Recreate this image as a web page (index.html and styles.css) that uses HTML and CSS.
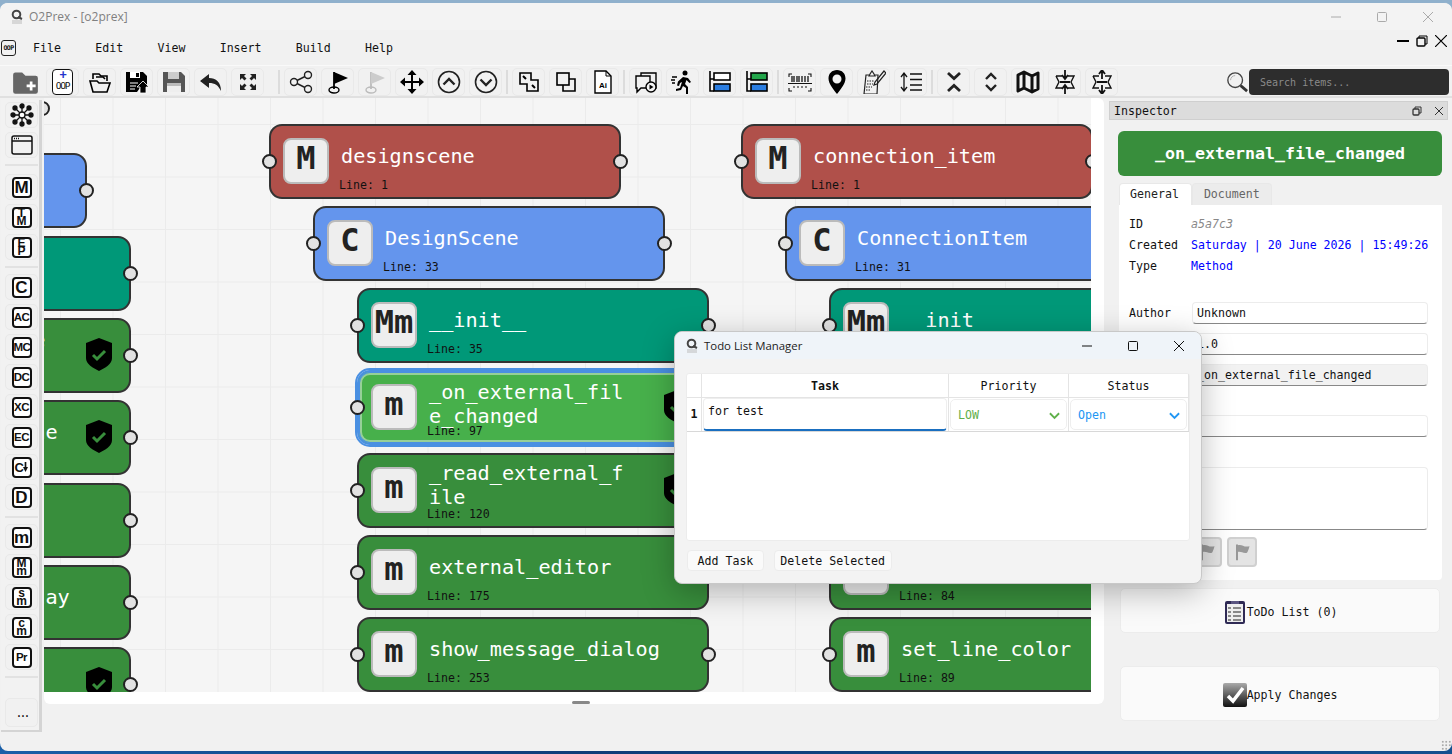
FILE: index.html
```html
<!DOCTYPE html>
<html lang="en">
<head>
<meta charset="UTF-8">
<title>O2Prex - [o2prex]</title>
<link rel="stylesheet" href="styles.css">
</head>
<body>
<div class="window">
  <div class="titlebar">
    <svg class="app-logo" viewBox="0 0 16 16"><circle cx="7.5" cy="5.500" r="3.800" fill="none" stroke="#444" stroke-width="2"/><path d="M9 8l4 2" stroke="#444" stroke-width="2"/><path d="M3 12h10M3 14h10" stroke="#bbb"/></svg>
    <span class="app-title">O2Prex - [o2prex]</span>
    <div class="win-controls">
      <svg viewBox="0 0 12 12"><path d="M1 6h10" stroke="#aaa"/></svg>
      <svg viewBox="0 0 12 12"><rect x="1.5" y="1.5" width="9" height="9" rx="1" fill="none" stroke="#aaa"/></svg>
      <svg viewBox="0 0 12 12"><path d="M1 1l10 10M11 1L1 11" stroke="#aaa"/></svg>
    </div>
  </div>

  <div class="menubar">
    <span class="oop-mini">OOP</span>
    <span class="menu-item">File</span>
    <span class="menu-item">Edit</span>
    <span class="menu-item">View</span>
    <span class="menu-item">Insert</span>
    <span class="menu-item">Build</span>
    <span class="menu-item">Help</span>
    <div class="mdi-controls">
      <svg viewBox="0 0 12 12"><path d="M0 6h12" stroke="#000" stroke-width="2"/></svg>
      <svg viewBox="0 0 12 12"><rect x="1" y="3" width="8" height="8" rx="1" fill="none" stroke="#000" stroke-width="1.4"/><path d="M3 3V1h8v8H9" fill="none" stroke="#000"/></svg>
      <svg viewBox="0 0 12 12"><path d="M0 0l12 12M12 0L0 12" stroke="#000" stroke-width="1.2"/></svg>
    </div>
  </div>

  <div class="toolbar">
    <button class="tool flat"><svg viewBox="0 0 24 24"><path d="M1 5a2 2 0 0 1 2-2h6l3 3h9a2 2 0 0 1 2 2v12a2 2 0 0 1-2 2H3a2 2 0 0 1-2-2z" fill="#666"/><path d="M17 11v8M13 15h8" stroke="#fff" stroke-width="2.4"/></svg></button>
    <button class="tool"><span class="oop-new"><b>+</b>OOP</span></button>
    <button class="tool"><svg viewBox="0 0 24 24" fill="none" stroke="#000" stroke-width="1.6"><path d="M5 9V4h6l2 2h6v5"/><path d="M8 7h7l2 2"/><path d="M2 11h7l2 2h11l-3 9H5z"/></svg></button>
    <button class="tool"><svg viewBox="0 0 24 24"><path d="M1 2h17l4 4v9h-5l-5 7H1z" fill="#000"/><path d="M5 2h10v6H5z" fill="#fff"/><path d="M11 3h3v4h-3z" fill="#000"/><path d="M5 13h8M5 16h6M5 19h5" stroke="#fff" stroke-width="1.2"/><path d="M18 11l6 6h-3v6h-6v-6h-3z" fill="#000" stroke="#fff" stroke-width=".8"/></svg></button>
    <button class="tool"><svg viewBox="0 0 24 24"><path d="M1 2h18l4 4v16H1z" fill="#555"/><path d="M6 2h11v7H6z" fill="#ccc"/><path d="M5 13h14v9H5z" fill="#eee"/><path d="M5 13h14v3H5z" fill="#bbb"/></svg></button>
    <button class="tool"><svg viewBox="0 0 24 24"><path d="M10 4L1 11l9 7v-5c6 0 9 2 12 8 0-9-5-13-12-13z" fill="#222"/></svg></button>
    <button class="tool"><svg viewBox="0 0 24 24" fill="#222"><path d="M4 4h6L8 6l2.500 2.500-2 2L6 8 4 10zM20 4h-6l2 2-2.500 2.500 2 2L18 8l2 2zM4 20h6l-2-2 2.500-2.500-2-2L6 16l-2-2zM20 20h-6l2-2-2.500-2.500 2-2L18 16l2-2z"/></svg></button>
    <span class="tool-sep"></span>
    <button class="tool"><svg viewBox="0 0 24 24" fill="none" stroke="#222" stroke-width="1.4"><circle cx="5" cy="12" r="3.500"/><circle cx="19" cy="5" r="3.500"/><circle cx="19" cy="19" r="3.500"/><path d="M8 10.500l8-4M8 13.500l8 4"/></svg></button>
    <button class="tool"><svg viewBox="0 0 24 24"><path d="M8 2v17" stroke="#000" stroke-width="1.800"/><path d="M8 2l14 6-14 6z" fill="#000"/><ellipse cx="8" cy="20" rx="5" ry="3" fill="none" stroke="#000" stroke-width="1.400"/></svg></button>
    <button class="tool"><svg viewBox="0 0 24 24"><path d="M8 2v17" stroke="#bbb" stroke-width="1.800"/><path d="M8 2l14 6-14 6z" fill="#ccc"/><ellipse cx="8" cy="20" rx="5" ry="3" fill="none" stroke="#bbb" stroke-width="1.400"/></svg></button>
    <button class="tool"><svg viewBox="0 0 24 24"><path d="M12 4v16M4 12h16" stroke="#000" stroke-width="2"/><path d="M12 0l4.500 5h-9zM12 24l4.500-5h-9zM0 12l5-4.500v9zM24 12l-5-4.500v9z" fill="#000"/></svg></button>
    <button class="tool"><svg viewBox="0 0 24 24" fill="none" stroke="#222" stroke-width="1.600"><circle cx="12" cy="12" r="10.500"/><path d="M6.500 14.500L12 9l5.500 5.500" stroke-width="2.400"/></svg></button>
    <button class="tool"><svg viewBox="0 0 24 24" fill="none" stroke="#222" stroke-width="1.600"><circle cx="12" cy="12" r="10.500"/><path d="M6.500 9.500L12 15l5.500-5.500" stroke-width="2.400"/></svg></button>
    <span class="tool-sep short"></span>
    <button class="tool"><svg viewBox="0 0 24 24" fill="none" stroke="#000" stroke-width="1.600"><path d="M3 3h11v7h7v11H10v-7H3z"/><path d="M6 6l3 3M18 18l-3-3" stroke-width="2"/></svg></button>
    <button class="tool"><svg viewBox="0 0 24 24" fill="none" stroke="#000" stroke-width="1.600"><rect x="3" y="3" width="12" height="12"/><path d="M15 9h6v12H9v-6"/></svg></button>
    <button class="tool"><svg viewBox="0 0 24 24"><path d="M4 1h11l5 5v17H4z" fill="#fff" stroke="#000" stroke-width="1.400"/><path d="M15 1v5h5" fill="none" stroke="#000"/><text x="12" y="18" class="ai-text">Ai</text></svg></button>
    <span class="tool-sep short"></span>
    <button class="tool"><svg viewBox="0 0 24 24" fill="none" stroke="#000" stroke-width="1.400"><path d="M7 6V3h15v15h-3"/><path d="M2 6h14v12H7l-4 4v-4H2z"/><circle cx="17" cy="17" r="5" fill="#f4f4f4"/><path d="M15.500 14.500l4 2.500-4 2.500z" fill="#000" stroke="none"/></svg></button>
    <button class="tool"><svg viewBox="0 0 24 24"><circle cx="14" cy="3" r="2.500"/><path d="M12 7l5 1 3 4-1.500 1-3-3-1.500 4 3 3v7h-2v-6l-3-2-2 4-5 1v-2l4-1 2-6-2 1-1 3-2-.5 1-4z"/><path d="M1 7h5M0 10h4M1 13h3" stroke="#000" stroke-width="1.300"/></svg></button>
    <button class="tool"><svg viewBox="0 0 24 24"><path d="M2 1v20h4M2 9h4" fill="none" stroke="#000" stroke-width="1.600"/><rect x="6" y="3" width="16" height="7" fill="#fff" stroke="#000" stroke-width="1.600"/><rect x="6" y="14" width="16" height="7" fill="#2a7de1" stroke="#000" stroke-width="1.600"/></svg></button>
    <button class="tool"><svg viewBox="0 0 24 24"><path d="M2 1v20h4M2 9h4" fill="none" stroke="#000" stroke-width="1.600"/><rect x="6" y="3" width="16" height="7" fill="#22a64a" stroke="#000" stroke-width="1.600"/><rect x="6" y="14" width="16" height="7" fill="#2a7de1" stroke="#000" stroke-width="1.600"/></svg></button>
    <span class="tool-sep short"></span>
    <button class="tool"><svg viewBox="0 0 24 24" fill="none" stroke="#111" stroke-width="1.100"><path d="M1 7V4h3M20 4h3v3M1 18v3h3M20 21h3v-3"/><path d="M4 6v6M6 6v6M9 6v6M11 6v6M14 6v6M17 6v6M20 6v6" stroke-width="1.300"/><path d="M0 13.500h24"/><path d="M5 17h2M9 17h2M13 17h2M17 17h2"/></svg></button>
    <button class="tool"><svg viewBox="0 0 24 24"><path fill-rule="evenodd" d="M12 0c-5 0-8.500 3.500-8.500 8.500C3.500 14 9 20 12 24c3-4 8.500-10 8.500-15.500C20.500 3.500 17 0 12 0zm0 4.500a4.500 4.500 0 1 1 0 9 4.500 4.500 0 0 1 0-9z"/></svg></button>
    <button class="tool"><svg viewBox="0 0 24 24" fill="none" stroke="#222" stroke-width="1.200"><path d="M13 5h3l-1 19H2L4 5h3"/><path d="M7 6l1-2 2-3 2 3 1 2z"/><path d="M5 11h7M5 14h6M4 17h6M4 20h5" stroke-dasharray="1.500 1"/><path d="M22 1l2 2-9 11-3 1 1-3z"/></svg></button>
    <button class="tool"><svg viewBox="0 0 24 24" fill="none" stroke="#111" stroke-width="1.300"><path d="M5 4v16M2 7l3-4 3 4M2 17l3 4 3-4"/><path d="M11 4h12M11 9.500h12M11 15h12M11 20h12"/></svg></button>
    <span class="tool-sep short"></span>
    <button class="tool"><svg viewBox="0 0 24 24" fill="none" stroke="#222" stroke-width="2.800"><path d="M6 3l6 5.500L18 3M6 21l6-5.500 6 5.500"/></svg></button>
    <button class="tool"><svg viewBox="0 0 24 24" fill="none" stroke="#222" stroke-width="2.400"><path d="M7 9l5-5 5 5M7 15l5 5 5-5"/></svg></button>
    <button class="tool"><svg viewBox="0 0 24 24" fill="none" stroke="#111" stroke-width="3" stroke-linejoin="round"><path d="M2 5l6-3 8 4 6-3v16l-6 3-8-4-6 3zM8 2v16M16 6v16"/></svg></button>
    <button class="tool"><svg viewBox="0 0 24 24" fill="none" stroke="#111" stroke-width="1.400"><path d="M3 6h6M15 6h6l-3 6 3 6h-6M9 18H3l3-6-3-6"/><path d="M12 0v8M12 24v-8M9 5l3 4 3-4M9 19l3-4 3 4M7 12h10" stroke-width="1.800"/></svg></button>
    <button class="tool"><svg viewBox="0 0 24 24" fill="none" stroke="#111" stroke-width="1.400"><path d="M3 6h6M15 6h6l-3 6 3 6h-6M9 18H3l3-6-3-6"/><path d="M12 9V1M12 15v8M9 4l3-4 3 4M9 20l3 4 3-4M7 12h10" stroke-width="1.800"/></svg></button>
    <div class="search">
      <svg viewBox="0 0 24 24" fill="none"><circle cx="10" cy="10" r="8" stroke="#444" stroke-width="1.500"/><path d="M5 10a5 5 0 0 1 5-5" stroke="#aaa"/><path d="M16 16l7 6" stroke="#333" stroke-width="3"/></svg>
      <div class="search-box">Search items...</div>
    </div>
  </div>

  <div class="workspace">
    <aside class="sidebar">
      <button class="side-btn"><svg viewBox="0 0 24 24" stroke="#111" stroke-width="1.300" fill="#111"><path d="M12 12L12 3M12 12L12 21M12 12L3 12M12 12L21 12M12 12L5 5M12 12L19 19M12 12L5 19M12 12L19 5"/><circle cx="12" cy="3" r="2"/><circle cx="12" cy="21" r="2"/><circle cx="3" cy="12" r="2"/><circle cx="21" cy="12" r="2"/><circle cx="5" cy="5" r="2"/><circle cx="19" cy="19" r="2"/><circle cx="5" cy="19" r="2"/><circle cx="19" cy="5" r="2"/><circle cx="12" cy="12" r="3" fill="#fff"/></svg></button>
      <button class="side-btn"><svg viewBox="0 0 24 24" fill="none" stroke="#111" stroke-width="1.500"><rect x="2" y="3" width="20" height="18" rx="2"/><path d="M2 8h20"/><path d="M4 5.500h5" stroke-dasharray="1 1"/></svg></button>
      <span class="side-sep first"></span>
      <button class="side-btn"><span class="kind">M</span></button>
      <button class="side-btn"><span class="kind stack">T<br>M</span></button>
      <button class="side-btn"><span class="kind stack">E<br>P</span></button>
      <span class="side-sep"></span>
      <button class="side-btn"><span class="kind">C</span></button>
      <button class="side-btn"><span class="kind two">AC</span></button>
      <button class="side-btn"><span class="kind two">MC</span></button>
      <button class="side-btn"><span class="kind two">DC</span></button>
      <button class="side-btn"><span class="kind two">XC</span></button>
      <button class="side-btn"><span class="kind two">EC</span></button>
      <button class="side-btn"><span class="kind two arrowed">C<svg viewBox="0 0 6 12"><path d="M3 0v7" stroke="#111" stroke-width="2"/><path d="M0 6h6l-3 6z" fill="#111"/></svg></span></button>
      <button class="side-btn"><span class="kind">D</span></button>
      <span class="side-sep"></span>
      <button class="side-btn"><span class="kind">m</span></button>
      <button class="side-btn"><span class="kind stack">M<br>m</span></button>
      <button class="side-btn"><span class="kind stack">s<br>m</span></button>
      <button class="side-btn"><span class="kind stack">c<br>m</span></button>
      <button class="side-btn"><span class="kind two">Pr</span></button>
      <span class="side-sep"></span>
      <button class="side-btn more">...</button>
    </aside>

    <div class="canvas-wrap">
      <div class="canvas">
        <div class="node red x-m0 y-a0"><i class="port l"></i><i class="port r"></i></div>

        <div class="node blue x-c0 y-b0"><i class="port r"></i></div>
        <div class="node teal x-f0 y-b1"><i class="port r"></i></div>
        <div class="node green x-f0 y-b2"><i class="port r"></i><h3 class="title wrap">_on_scene_change<br>d</h3><svg class="shield"><use href="#shield"/></svg></div>
        <div class="node green x-f0 y-b3"><i class="port r"></i><h3 class="title">update_node_scene</h3><svg class="shield"><use href="#shield"/></svg></div>
        <div class="node green x-f0 y-b4"><i class="port r"></i></div>
        <div class="node green x-f0 y-b5"><i class="port r"></i><h3 class="title">update_the_display</h3></div>
        <div class="node green x-f0 y-b6"><i class="port r"></i><svg class="shield"><use href="#shield"/></svg></div>

        <div class="node red x-m1 y-r0"><i class="port l"></i><i class="port r"></i><span class="badge">M</span><h3 class="title">designscene</h3><span class="line">Line: 1</span></div>
        <div class="node blue x-c1 y-r1"><i class="port l"></i><i class="port r"></i><span class="badge">C</span><h3 class="title">DesignScene</h3><span class="line">Line: 33</span></div>
        <div class="node teal x-f1 y-r2"><i class="port l"></i><i class="port r"></i><span class="badge">Mm</span><h3 class="title">__init__</h3><span class="line">Line: 35</span></div>
        <div class="node lime selected x-f1 y-r3"><i class="port l"></i><i class="port r"></i><span class="badge">m</span><h3 class="title wrap">_on_external_fil<br>e_changed</h3><span class="line">Line: 97</span><svg class="shield"><use href="#shield"/></svg></div>
        <div class="node green x-f1 y-r4"><i class="port l"></i><i class="port r"></i><span class="badge">m</span><h3 class="title wrap higher">_read_external_f<br>ile</h3><span class="line">Line: 120</span><svg class="shield"><use href="#shield"/></svg></div>
        <div class="node green x-f1 y-r5"><i class="port l"></i><i class="port r"></i><span class="badge">m</span><h3 class="title">external_editor</h3><span class="line">Line: 175</span></div>
        <div class="node green x-f1 y-r6"><i class="port l"></i><i class="port r"></i><span class="badge">m</span><h3 class="title">show_message_dialog</h3><span class="line">Line: 253</span></div>

        <div class="node red x-m2 y-r0"><i class="port l"></i><i class="port r"></i><span class="badge">M</span><h3 class="title">connection_item</h3><span class="line">Line: 1</span></div>
        <div class="node blue x-c2 y-r1"><i class="port l"></i><i class="port r"></i><span class="badge">C</span><h3 class="title">ConnectionItem</h3><span class="line">Line: 31</span></div>
        <div class="node teal x-f2 y-r2"><i class="port l"></i><i class="port r"></i><span class="badge">Mm</span><h3 class="title">__init__</h3><span class="line">Line: 35</span></div>
        <div class="node green x-f2 y-r5"><i class="port l"></i><i class="port r"></i><span class="badge">m</span><h3 class="title">set_line_width</h3><span class="line">Line: 84</span></div>
        <div class="node green x-f2 y-r6"><i class="port l"></i><i class="port r"></i><span class="badge">m</span><h3 class="title">set_line_color</h3><span class="line">Line: 89</span></div>
      </div>
      <span class="scroll-handle"></span>
    </div>

    <section class="inspector">
      <header class="insp-head">
        <span>Inspector</span>
        <svg viewBox="0 0 12 12"><rect x="2" y="4" width="6" height="6" rx="1" fill="none" stroke="#333" stroke-width="1.300"/><path d="M4 4V2h6v6H8" fill="none" stroke="#333"/></svg>
        <svg viewBox="0 0 12 12"><path d="M2 2l8 8M10 2l-8 8" stroke="#333"/></svg>
      </header>
      <div class="insp-name">_on_external_file_changed</div>
      <div class="tabs"><span class="tab active">General</span><span class="tab">Document</span></div>
      <div class="panel">
        <div class="info"><span>ID</span><em>a5a7c3</em></div>
        <div class="info"><span>Created</span><b>Saturday | 20 June 2026 | 15:49:26</b></div>
        <div class="info"><span>Type</span><b>Method</b></div>
        <div class="field first"><label>Author</label><div class="input">Unknown</div></div>
        <div class="field"><label>Version</label><div class="input">1.0</div></div>
        <div class="field"><label>Name</label><div class="input readonly">_on_external_file_changed</div></div>
        <div class="field spaced"><label>Tags</label><div class="input"></div></div>
        <div class="field notes"><label>Notes</label><div class="input area"></div></div>
        <div class="flags">
          <span class="flag"><svg viewBox="0 0 24 24"><path d="M6 3v19" stroke="#888" stroke-width="2"/><path d="M7 4c5-2 7 3 14 1-1 4-2 6-3 8-5 1-7-2-11-1z" fill="#999"/></svg></span>
          <span class="flag"><svg viewBox="0 0 24 24"><path d="M6 3v19" stroke="#888" stroke-width="2"/><path d="M7 4c5-2 7 3 14 1-1 4-2 6-3 8-5 1-7-2-11-1z" fill="#999"/></svg></span>
        </div>
      </div>
      <button class="wide-btn todo">
        <svg viewBox="0 0 20 24"><rect x="0" y="1" width="20" height="23" rx="2" fill="#2f2a55"/><rect x="2" y="4" width="16" height="18" fill="#eee"/><rect x="6" y="1" width="8" height="3" fill="#5a5480"/><path d="M8 8h8M8 12h8M8 16h8M8 20h8M3 8h3M3 12h3M3 16h3M3 20h3" stroke="#222" stroke-width="1.200"/></svg>
        ToDo List (0)
      </button>
      <button class="wide-btn apply">
        <svg viewBox="0 0 24 24"><defs><linearGradient id="applyFill" x1="0" y1="0" x2="0" y2="1"><stop offset="0" stop-color="#aaa"/><stop offset="1" stop-color="#111"/></linearGradient></defs><rect width="24" height="24" rx="2" fill="url(#applyFill)"/><path d="M5 13l5 5L20 5" fill="none" stroke="#fff" stroke-width="3.500"/></svg>
        Apply Changes
      </button>
      <span class="grip"></span>
    </section>
  </div>
</div>

<div class="dialog">
  <div class="dlg-title">
    <svg class="app-logo" viewBox="0 0 16 16"><circle cx="7.500" cy="5.500" r="3.800" fill="none" stroke="#444" stroke-width="2"/><path d="M9 8l4 2" stroke="#444" stroke-width="2"/><path d="M3 12h10M3 14h10" stroke="#bbb"/></svg>
    <span>Todo List Manager</span>
    <div class="dlg-controls">
      <svg viewBox="0 0 12 12"><path d="M1 6h10" stroke="#111"/></svg>
      <svg viewBox="0 0 12 12"><rect x="1.500" y="1.500" width="9" height="9" rx="1" fill="none" stroke="#111"/></svg>
      <svg viewBox="0 0 12 12"><path d="M1 1l10 10M11 1L1 11" stroke="#111"/></svg>
    </div>
  </div>
  <div class="todo-table">
    <div class="todo-row head">
      <span class="c-num"></span>
      <span class="c-task strong">Task</span>
      <span class="c-pri">Priority</span>
      <span class="c-stat">Status</span>
    </div>
    <div class="todo-row body">
      <span class="c-num strong">1</span>
      <span class="c-task"><span class="task-edit">for test</span></span>
      <span class="c-pri"><span class="combo low">LOW<svg viewBox="0 0 12 8"><path d="M1 1l5 5 5-5" fill="none" stroke="currentColor" stroke-width="2"/></svg></span></span>
      <span class="c-stat"><span class="combo open">Open<svg viewBox="0 0 12 8"><path d="M1 1l5 5 5-5" fill="none" stroke="currentColor" stroke-width="2"/></svg></span></span>
    </div>
  </div>
  <div class="dlg-actions">
    <button class="dlg-btn">Add Task</button>
    <button class="dlg-btn tight">Delete Selected</button>
  </div>
</div>

<svg class="defs" width="0" height="0">
  <symbol id="shield" viewBox="0 0 28 33">
    <path d="M14 0l13 5v15c0 6-7 10-13 13C8 30 1 26 1 20V5z" fill="#000"/>
    <path d="M8 17l4 4 8-8" fill="none" stroke="#388e3c" stroke-width="3"/>
  </symbol>
</svg>
</body>
</html>
```

FILE: styles.css
```css
* {
  box-sizing: border-box;
}
html, body {
  margin: 0;
  height: 754px;
  overflow: hidden;
}
body {
  position: relative;
  padding-top: 2px;
  font-family: "DejaVu Sans Mono", monospace;
  font-size: 11.6px;
  color: #111;
  background:
    linear-gradient(#8fb0cc 40px, transparent 40px),
    linear-gradient(90deg, #1a5fa8, #0e3c78 40%, #15508f);
}
button {
  font: inherit;
  color: inherit;
  padding: 0;
}
h3 {
  margin: 0;
  font-weight: normal;
}
.defs {
  position: absolute;
}

.window {
  height: 749px;
  display: flex;
  flex-direction: column;
  background: #f1f1f1;
  border-radius: 8px;
  border-top: 1px solid #8fb0cc;
  overflow: hidden;
}

/* title + menu */
.titlebar {
  height: 27px;
  flex: none;
  display: flex;
  align-items: center;
  padding-left: 9px;
  background: #f3f3f3;
}
.app-logo {
  width: 16px;
  height: 16px;
}
.app-title {
  margin-left: 4px;
  font-family: "Open Sans", sans-serif;
  font-size: 12px;
  color: #808080;
}
.win-controls {
  margin-left: auto;
  display: flex;
  gap: 34px;
  padding-right: 18px;
}
.win-controls svg {
  width: 12px;
  height: 12px;
}
.menubar {
  height: 36px;
  flex: none;
  display: flex;
  align-items: center;
  padding-left: 1px;
  border-bottom: 1px solid #f9f9f9;
}
.oop-mini {
  width: 15px;
  height: 16px;
  margin-right: 17px;
  border: 1px solid #222;
  border-radius: 3px;
  font-size: 6.500px;
  font-weight: bold;
  line-height: 14px;
  text-align: center;
  letter-spacing: -.6px;
}
.menu-item {
  margin-right: 34.300px;
}
.mdi-controls {
  margin-left: auto;
  align-self: flex-start;
  margin-top: 5px;
  display: flex;
  gap: 7px;
  padding-right: 5px;
}
.mdi-controls svg {
  width: 12px;
  height: 12px;
}

/* main toolbar */
.toolbar {
  height: 32px;
  flex: none;
  display: flex;
  align-items: center;
  gap: 4px;
  padding: 2px 3px 0 9px;
  border-bottom: 2px solid #e0e0e0;
}
.tool {
  width: 33px;
  height: 28px;
  flex: none;
  display: flex;
  align-items: center;
  justify-content: center;
  background: #f1f1f1;
  border: 1px solid #e9e9e9;
  border-radius: 5px;
}
.tool svg {
  width: 24px;
  height: 24px;
}
.tool.flat {
  border-color: transparent;
}
.tool.flat svg {
  width: 27px;
  height: 27px;
}
.tool-sep {
  width: 2px;
  height: 24px;
  margin-left: 10px;
  background: #dcdcdc;
}
.tool-sep.short {
  margin-left: 0;
}
.oop-new {
  width: 21px;
  height: 26px;
  border: 1.500px solid #111;
  border-radius: 4px;
  background: #fff;
  font-size: 9.500px;
  line-height: 9px;
  letter-spacing: -1.300px;
  text-align: center;
}
.oop-new b {
  display: block;
  font-size: 12px;
  line-height: 11px;
  color: #2233cc;
}
.ai-text {
  font-family: "Liberation Sans", sans-serif;
  font-size: 8px;
  font-weight: bold;
  text-anchor: middle;
}
.search {
  margin-left: auto;
  display: flex;
  align-items: center;
  gap: 1px;
}
.search svg {
  width: 22px;
  height: 22px;
}
.search-box {
  width: 200px;
  height: 26px;
  padding-left: 11px;
  background: #2d2d2d;
  border-radius: 4px;
  color: #8a8a8a;
  font-size: 10px;
  line-height: 27px;
}

/* left palette */
.workspace {
  flex: 1;
  min-height: 0;
  display: flex;
}
.sidebar {
  width: 41px;
  height: 632px;
  margin: 2px 2px 0 1px;
  flex: none;
  display: flex;
  flex-direction: column;
  gap: 4px;
  padding: 2px 1px 0 4px;
  background: #f2f2f2;
  border-right: 3px solid #d4d4d4;
  border-bottom: 2px solid #d4d4d4;
}
.side-btn {
  height: 26px;
  flex: none;
  display: flex;
  align-items: center;
  justify-content: center;
  background: #f1f1f1;
  border: 1px solid #e9e9e9;
  border-radius: 5px;
}
.side-btn svg {
  width: 24px;
  height: 24px;
}
.side-btn.more {
  height: 29px;
  margin-top: 14px;
  letter-spacing: -3px;
}
.side-sep {
  height: 2px;
  margin: 2px 0;
  flex: none;
  background: #e2e2e2;
}
.side-sep.first {
  margin-bottom: 4px;
}
.kind {
  width: 20px;
  height: 21px;
  background: #fff;
  border: 2px solid #111;
  border-radius: 4px;
  font-family: "Liberation Sans", sans-serif;
  font-size: 17px;
  font-weight: bold;
  line-height: 17px;
  text-align: center;
}
.kind.two {
  font-size: 11.500px;
  letter-spacing: -.5px;
}
.kind.stack {
  font-size: 12px;
  line-height: 8.500px;
}
.kind.arrowed {
  display: flex;
  align-items: center;
  justify-content: center;
  font-size: 13px;
}
.kind.arrowed svg {
  width: 5px;
  height: 12px;
}

/* canvas and nodes */
.canvas-wrap {
  position: relative;
  width: 1060px;
  height: 606px;
  flex: none;
  padding: 0 13px 12px 0;
  background: #fff;
  border-radius: 6px;
}
.canvas {
  position: relative;
  height: 100%;
  overflow: hidden;
  background-color: #f5f5f5;
  background-image:
    linear-gradient(#ebebeb 1px, transparent 1px),
    linear-gradient(90deg, #ebebeb 1px, transparent 1px);
  background-size: 52.500px 52.500px;
  background-position: 16px 26px;
}
.scroll-handle {
  position: absolute;
  left: 528px;
  bottom: 0;
  width: 18px;
  height: 3px;
  background: #888;
  border-radius: 2px;
}
.node {
  position: absolute;
  width: 352px;
  height: 75px;
  border: 2px solid #333;
  border-radius: 13px;
}
.red { background: #b0504a; }
.blue { background: #6495ed; }
.teal { background: #009878; }
.green { background: #388e3c; }
.lime { background: #47b04b; }
.node.selected {
  border-color: #4a90e2;
  outline: 2px solid #4a90e2;
  box-shadow: inset 0 0 0 1px #4a90e2, inset 0 0 0 3px #96d098;
}

.x-m0 { left: -353px; }
.x-c0 { left: -309px; }
.x-f0 { left: -265px; }
.x-m1 { left: 225px; }
.x-c1 { left: 269px; }
.x-f1 { left: 313px; }
.x-m2 { left: 697px; }
.x-c2 { left: 741px; }
.x-f2 { left: 785px; }

.y-a0 { top: -27px; }
.y-r0 { top: 26px; }
.y-r1 { top: 108px; }
.y-r2 { top: 190px; }
.y-r3 { top: 272px; }
.y-r4 { top: 355px; }
.y-r5 { top: 437px; }
.y-r6 { top: 519px; }
.y-b0 { top: 55px; }
.y-b1 { top: 138px; }
.y-b2 { top: 220px; }
.y-b3 { top: 302px; }
.y-b4 { top: 385px; }
.y-b5 { top: 467px; }
.y-b6 { top: 549px; }

.port {
  position: absolute;
  top: 28px;
  width: 15px;
  height: 15px;
  background: #e2e2e2;
  border: 2px solid #222;
  border-radius: 50%;
}
.port.l { left: -9px; }
.port.r { right: -9px; }
.badge {
  position: absolute;
  left: 12px;
  top: 12px;
  width: 46px;
  height: 46px;
  background: #eee;
  border: 2px solid #bbb;
  border-radius: 8px;
  color: #222;
  font-size: 32px;
  font-weight: bold;
  line-height: 37px;
  text-align: center;
  white-space: nowrap;
}
.title {
  position: absolute;
  left: 70px;
  top: 18px;
  color: #fff;
  font-size: 20.200px;
  line-height: 24px;
  white-space: nowrap;
}
.title.wrap {
  top: 8px;
}
.title.wrap.higher {
  top: 6px;
}
.line {
  position: absolute;
  left: 68px;
  top: 52px;
  font-size: 11.600px;
  line-height: 14px;
}
.shield {
  position: absolute;
  right: 16px;
  top: 18px;
  width: 28px;
  height: 33px;
}

/* inspector */
.inspector {
  position: relative;
  width: 344px;
  margin-left: 4px;
  flex: none;
  padding: 3px 4px 0 1px;
}
.insp-head {
  height: 19px;
  display: flex;
  align-items: center;
  gap: 10px;
  padding: 0 2px 0 4px;
  background: #dcdcdc;
  border: 1px solid #cfcfcf;
}
.insp-head span {
  margin-right: auto;
}
.insp-head svg {
  width: 12px;
  height: 12px;
}
.insp-name {
  height: 45px;
  margin: 11px 6px 0 9px;
  background: #388e3c;
  border-radius: 6px;
  color: #fff;
  font-size: 16.600px;
  font-weight: bold;
  line-height: 46px;
  text-align: center;
}
.tabs {
  display: flex;
  margin: 7px 0 0 10px;
}
.tab {
  height: 22px;
  padding: 0 11px;
  background: #ececec;
  border: 1px solid #e8e8e8;
  border-bottom: none;
  border-radius: 4px 4px 0 0;
  color: #666;
  line-height: 20px;
}
.tab.active {
  padding: 0 12px 0 10px;
  background: #fff;
  color: #222;
}
.panel {
  height: 375px;
  margin: 0 6px 0 10px;
  padding: 9px 14px 0 10px;
  background: #fff;
  border-radius: 0 0 4px 4px;
}
.info {
  display: flex;
  height: 21px;
  line-height: 21px;
  white-space: nowrap;
}
.info span {
  width: 62px;
  flex: none;
}
.info em {
  color: #888;
}
.info b {
  color: #0000ff;
  font-weight: normal;
}
.field {
  display: flex;
  align-items: center;
  margin-bottom: 9px;
}
.field.first {
  margin-top: 25px;
}
.field.spaced {
  margin-top: 29px;
}
.field.notes {
  margin-top: 30px;
  margin-bottom: 7px;
}
.field label {
  width: 63px;
  flex: none;
}
.input {
  flex: 1;
  height: 22px;
  padding-left: 4px;
  background: #fff;
  border: 1px solid #ececec;
  border-bottom-color: #888;
  border-radius: 4px;
  line-height: 20px;
}
.input.readonly {
  background: #f2f2f2;
}
.input.area {
  height: 63px;
}
.flags {
  display: flex;
  gap: 5px;
  padding-left: 63px;
}
.flag {
  width: 30px;
  height: 30px;
  padding: 3px;
  background: #e4e4e4;
  border: 2px solid #d0d0d0;
  border-radius: 4px;
}
.flag svg {
  display: block;
  width: 100%;
  height: 100%;
}
.wide-btn {
  width: 320px;
  margin-left: 11px;
  padding-top: 2px;
  display: flex;
  align-items: center;
  justify-content: center;
  background: #fafafa;
  border: 1px solid #ececec;
  border-radius: 5px;
}
.wide-btn.todo {
  height: 45px;
  margin-top: 8px;
}
.wide-btn.apply {
  height: 55px;
  margin-top: 33px;
}
.wide-btn svg {
  width: 24px;
  height: 24px;
}
.grip {
  position: absolute;
  right: 1px;
  bottom: 1px;
  width: 10px;
  height: 10px;
  background-image: radial-gradient(#aaa 1px, transparent 1px);
  background-size: 3.500px 3.500px;
}

/* todo dialog */
.dialog {
  position: absolute;
  left: 674px;
  top: 331px;
  width: 528px;
  height: 253px;
  background: #f3f3f3;
  border: 1px solid #c8c8c8;
  border-radius: 8px;
  box-shadow: 0 8px 32px rgba(0, 0, 0, .28);
  overflow: hidden;
}
.dlg-title {
  height: 27px;
  display: flex;
  align-items: center;
  padding-left: 9px;
  background: #eff4f9;
  font-family: "Open Sans", sans-serif;
  font-size: 11.400px;
  color: #222;
}
.dlg-title span {
  margin-left: 4px;
}
.dlg-controls {
  margin-left: auto;
  display: flex;
  gap: 34px;
  padding-right: 16px;
}
.dlg-controls svg {
  width: 12px;
  height: 12px;
}
.todo-table {
  height: 168px;
  margin: 14px 11px 0;
  background: #fff;
  border-radius: 3px;
  border: 1px solid #ececec;
}
.todo-row {
  display: flex;
  text-align: center;
}
.todo-row.head {
  height: 24px;
  line-height: 25px;
  border-bottom: 1px solid #e4e4e4;
}
.todo-row.body {
  height: 34px;
  line-height: 33px;
  border-bottom: 1px solid #d8d8d8;
}
.strong {
  font-weight: bold;
}
.c-num {
  width: 15px;
  flex: none;
  border-right: 1px solid #e4e4e4;
}
.c-task {
  width: 247px;
  flex: none;
  border-right: 1px solid #e4e4e4;
}
.c-pri, .c-stat {
  width: 120px;
  flex: none;
  border-right: 1px solid #e4e4e4;
}
.task-edit {
  display: block;
  height: 33px;
  margin: 0 1px;
  padding: 2px 0 0 4px;
  background: #fff;
  border: 1px solid #eee;
  border-bottom: 2px solid #1a6fc0;
  border-radius: 4px;
  line-height: 20px;
  text-align: left;
}
.combo {
  display: flex;
  align-items: center;
  justify-content: space-between;
  height: 31px;
  margin: 1px;
  padding: 2px 6px 0 7px;
  border: 1px solid #eee;
  border-radius: 5px;
}
.combo svg {
  width: 11px;
  height: 8px;
}
.combo.low {
  color: #5fb04a;
}
.combo.open {
  color: #2196f3;
}
.dlg-actions {
  display: flex;
  gap: 10px;
  padding: 9px 0 0 12px;
}
.dlg-btn {
  height: 21px;
  padding: 0 9.500px;
  background: #fafafa;
  border: 1px solid #ececec;
  border-radius: 4px;
}
.dlg-btn.tight {
  padding: 0 5.500px;
}
```
